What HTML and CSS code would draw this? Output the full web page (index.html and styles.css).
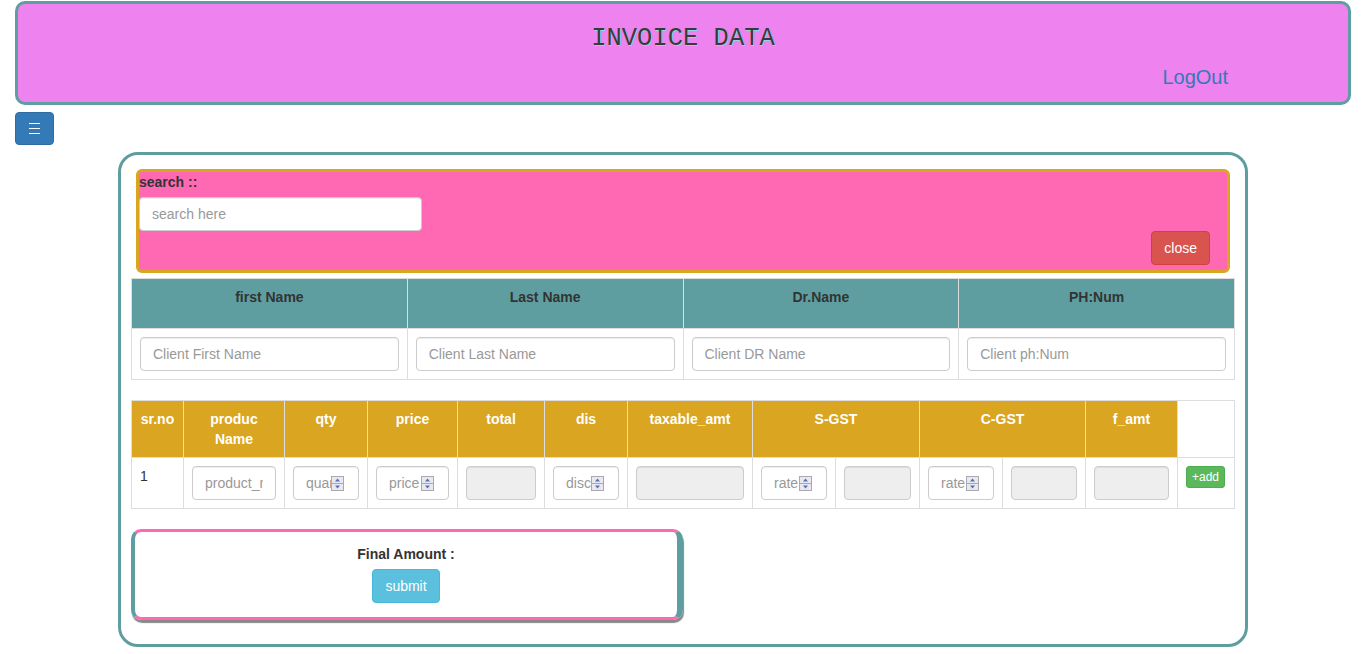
FILE: index.html
```html
<!DOCTYPE html>
<html>
<head>
<meta charset="utf-8">
<title>Invoice Data</title>
<link rel="stylesheet" href="styles.css">
</head>
<body>
<header class="top">
  <h1 class="title">INVOICE DATA</h1>
  <div class="logout-row"><a class="logout" href="#">LogOut</a></div>
</header>
<button class="menu-btn" type="button" aria-label="menu">
  <svg width="11" height="11" viewBox="0 0 11 11"><path d="M0 0.5H11M0 5.5H11M0 10.5H11" stroke="#fff" stroke-width="1"/></svg>
</button>

<main class="container">
  <section class="search-panel">
    <label class="lbl">search ::</label>
    <input class="form-control search-input" type="text" placeholder="search here">
    <div class="close-row"><button class="btn btn-danger" type="button">close</button></div>
  </section>

  <table class="tbl client-tbl">
    <thead>
      <tr><th>first Name</th><th>Last Name</th><th>Dr.Name</th><th>PH:Num</th></tr>
    </thead>
    <tbody>
      <tr>
        <td><input class="form-control" type="text" placeholder="Client First Name"></td>
        <td><input class="form-control" type="text" placeholder="Client Last Name"></td>
        <td><input class="form-control" type="text" placeholder="Client DR Name"></td>
        <td><input class="form-control" type="text" placeholder="Client ph:Num"></td>
      </tr>
    </tbody>
  </table>

  <table class="tbl item-tbl">
    <colgroup>
      <col class="c-sr"><col class="c-prod"><col class="c-qty"><col class="c-price"><col class="c-total"><col class="c-dis"><col class="c-tax"><col class="c-g1"><col class="c-g2"><col class="c-g1"><col class="c-g3"><col class="c-famt"><col class="c-add">
    </colgroup>
    <thead>
      <tr>
        <th>sr.no</th><th>produc<br>Name</th><th>qty</th><th>price</th><th>total</th><th>dis</th><th>taxable_amt</th><th colspan="2">S-GST</th><th colspan="2">C-GST</th><th>f_amt</th><th class="blank"></th>
      </tr>
    </thead>
    <tbody>
      <tr>
        <td class="srno">1</td>
        <td><input class="form-control" type="text" placeholder="product_name"></td>
        <td><div class="form-control num"><input type="text" placeholder="quantity"><svg class="spin" width="13" height="15" viewBox="0 0 13 15"><rect x="0.5" y="0.5" width="12" height="14" fill="#e8e8ee" stroke="#a9a9b4"/><path d="M1 7.5H12" stroke="#a9a9b4"/><path d="M4 5.5L6.5 2.5L9 5.5Z" fill="#5670b8"/><path d="M4 9.5L6.5 12.5L9 9.5Z" fill="#5670b8"/></svg></div></td>
        <td><div class="form-control num"><input type="text" placeholder="price"><svg class="spin" width="13" height="15" viewBox="0 0 13 15"><rect x="0.5" y="0.5" width="12" height="14" fill="#e8e8ee" stroke="#a9a9b4"/><path d="M1 7.5H12" stroke="#a9a9b4"/><path d="M4 5.5L6.5 2.5L9 5.5Z" fill="#5670b8"/><path d="M4 9.5L6.5 12.5L9 9.5Z" fill="#5670b8"/></svg></div></td>
        <td><input class="form-control ro" type="text" readonly></td>
        <td><div class="form-control num"><input type="text" placeholder="discount"><svg class="spin" width="13" height="15" viewBox="0 0 13 15"><rect x="0.5" y="0.5" width="12" height="14" fill="#e8e8ee" stroke="#a9a9b4"/><path d="M1 7.5H12" stroke="#a9a9b4"/><path d="M4 5.5L6.5 2.5L9 5.5Z" fill="#5670b8"/><path d="M4 9.5L6.5 12.5L9 9.5Z" fill="#5670b8"/></svg></div></td>
        <td><input class="form-control ro" type="text" readonly></td>
        <td><div class="form-control num"><input type="text" placeholder="rate"><svg class="spin" width="13" height="15" viewBox="0 0 13 15"><rect x="0.5" y="0.5" width="12" height="14" fill="#e8e8ee" stroke="#a9a9b4"/><path d="M1 7.5H12" stroke="#a9a9b4"/><path d="M4 5.5L6.5 2.5L9 5.5Z" fill="#5670b8"/><path d="M4 9.5L6.5 12.5L9 9.5Z" fill="#5670b8"/></svg></div></td>
        <td><input class="form-control ro" type="text" readonly></td>
        <td><div class="form-control num"><input type="text" placeholder="rate"><svg class="spin" width="13" height="15" viewBox="0 0 13 15"><rect x="0.5" y="0.5" width="12" height="14" fill="#e8e8ee" stroke="#a9a9b4"/><path d="M1 7.5H12" stroke="#a9a9b4"/><path d="M4 5.5L6.5 2.5L9 5.5Z" fill="#5670b8"/><path d="M4 9.5L6.5 12.5L9 9.5Z" fill="#5670b8"/></svg></div></td>
        <td><input class="form-control ro" type="text" readonly></td>
        <td><input class="form-control ro" type="text" readonly></td>
        <td><button class="btn btn-success btn-xs" type="button">+add</button></td>
      </tr>
    </tbody>
  </table>

  <section class="final-box">
    <label class="lbl">Final Amount :</label>
    <button class="btn btn-info" type="button">submit</button>
  </section>
</main>
</body>
</html>
```

FILE: styles.css
```css
* { box-sizing: border-box; }

html, body {
  margin: 0;
  padding: 0;
  background: #fff;
  font-family: "Liberation Sans", Arial, Helvetica, sans-serif;
  font-size: 14px;
  line-height: 20px;
  color: #333;
}

.top {
  margin: 1px 15px 0;
  height: 104px;
  background: #ee82ee;
  border: 3px solid #5f9ea0;
  border-radius: 10px;
  display: flex;
  flex-direction: column;
}

.title {
  margin: 0;
  padding-top: 22px;
  height: 46px;
  text-align: center;
  font-family: "Liberation Mono", "Courier New", monospace;
  font-weight: normal;
  font-size: 25.5px;
  line-height: 26px;
  color: #3a3a3a;
  text-shadow: 1px 1px 0 #92d3ea;
}

.logout-row {
  display: flex;
  justify-content: flex-end;
  padding: 16px 120px 0 0;
}

.logout {
  font-size: 20px;
  line-height: 22px;
  color: #337ab7;
  text-decoration: none;
}

.menu-btn {
  display: flex;
  align-items: center;
  justify-content: center;
  margin: 7px 0 0 15px;
  width: 39px;
  height: 33px;
  padding: 0;
  background: #337ab7;
  border: 1px solid #2e6da4;
  border-radius: 4px;
}

.container {
  width: 1130px;
  margin: 7px auto 0;
  border: 3px solid #5f9ea0;
  border-radius: 20px;
  padding: 14px 10px 24px;
}

.search-panel {
  margin: 0 5px;
  height: 104px;
  background: #ff69b4;
  border: 3px solid #daa520;
  border-radius: 6px;
}

.lbl {
  display: inline-block;
  font-weight: bold;
  margin-bottom: 5px;
}

.form-control {
  display: block;
  width: 100%;
  height: 34px;
  padding: 6px 12px;
  font-family: inherit;
  font-size: 14px;
  line-height: 20px;
  color: #555;
  background: #fff;
  border: 1px solid #ccc;
  border-radius: 4px;
  box-shadow: inset 0 1px 1px rgba(0,0,0,.075);
}

.form-control::placeholder { color: #999; }

.search-input { width: 283px; }

.close-row {
  display: flex;
  justify-content: flex-end;
  padding-right: 17px;
}

.btn {
  display: inline-block;
  height: 34px;
  padding: 6px 12px;
  font-family: inherit;
  font-size: 14px;
  line-height: 20px;
  color: #fff;
  border: 1px solid transparent;
  border-radius: 4px;
}

.btn-danger { background: #d9534f; border-color: #d43f3a; }
.btn-info { background: #5bc0de; border-color: #46b8da; }
.btn-success { background: #5cb85c; border-color: #4cae4c; }

.btn-xs {
  height: 22px;
  padding: 1px 5px;
  font-size: 12px;
  line-height: 18px;
  border-radius: 3px;
}

.tbl {
  width: 100%;
  border-collapse: collapse;
  margin-bottom: 20px;
}

.tbl th, .tbl td {
  border: 1px solid #ddd;
  padding: 8px;
  vertical-align: top;
  line-height: 20px;
  color: #333;
}

.client-tbl {
  margin-top: 5px;
  table-layout: fixed;
}

.client-tbl th {
  background: #5f9ea0;
  color: #333;
  padding-bottom: 21px;
  text-align: center;
}

.item-tbl { table-layout: fixed; }

.item-tbl th {
  background: #daa520;
  color: #fff;
  text-align: center;
}

.item-tbl th.blank { background: #fff; }

.srno { color: #333; }

.c-sr { width: 52px; }
.c-prod { width: 101px; }
.c-qty { width: 83px; }
.c-price { width: 90px; }
.c-total { width: 87px; }
.c-dis { width: 83px; }
.c-tax { width: 125px; }
.c-g1 { width: 83px; }
.c-g2 { width: 84px; }
.c-g3 { width: 83px; }
.c-famt { width: 92px; }
.c-add { width: 57px; }

.ro { background: #eee; }

.num {
  display: flex;
  align-items: center;
  padding-right: 14px;
}

.num input {
  flex: 1 1 auto;
  min-width: 0;
  width: 0;
  border: 0;
  padding: 0;
  margin: 0;
  background: transparent;
  font-family: inherit;
  font-size: 14px;
  color: #555;
  outline: none;
}

.num input::placeholder { color: #999; }

.spin { flex: none; display: block; }

.final-box {
  width: 552px;
  height: 91px;
  display: flex;
  flex-direction: column;
  align-items: center;
  padding-top: 12px;
  border-style: solid;
  border-color: #ff69b4 #5f9ea0;
  border-width: 3px 6px 3px 4px;
  border-radius: 10px;
  box-shadow: 1px 3px 1px #888;
}
```
